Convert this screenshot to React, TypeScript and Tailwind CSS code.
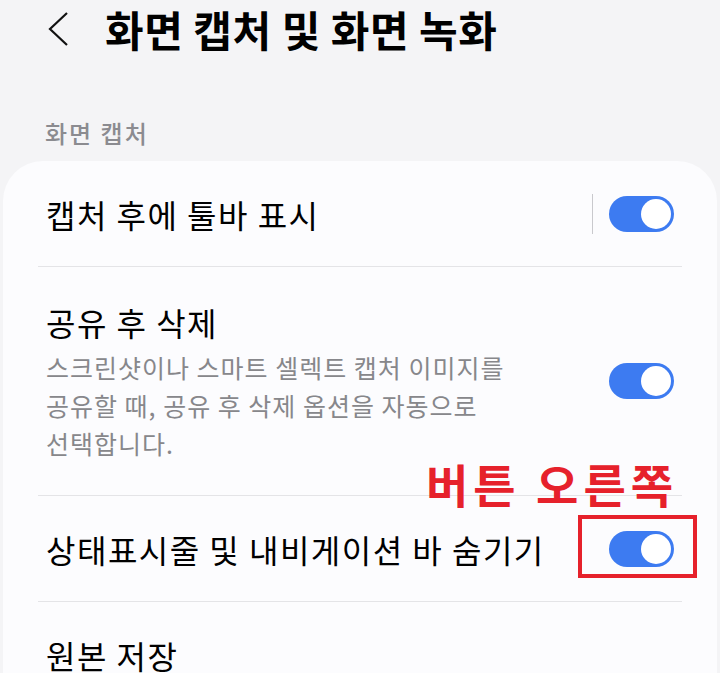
import type { ReactNode } from 'react'

const FONT = { fontFamily: '"Noto Sans CJK KR", "Noto Sans", sans-serif' }

function Toggle() {
  return (
    <span className="relative inline-flex h-[36px] w-[65px] shrink-0 items-center rounded-full bg-[#3d7bf1]">
      <span className="absolute right-[3px] top-[3px] h-[30px] w-[30px] rounded-full bg-white" />
    </span>
  )
}

function Divider() {
  return <div className="h-px bg-[#e4e4e7]" />
}

function Row({ children, divider = false }: { children: ReactNode; divider?: boolean }) {
  return (
    <div className="flex h-[105px] items-center justify-between px-[8px]">
      <span className="whitespace-nowrap text-[32px] leading-[44px] tracking-[1.5px] text-black">{children}</span>
      <div className="flex items-center">
        {divider && <span className="mr-[16px] h-[40px] w-px bg-[#c9c9cd]" />}
        <Toggle />
      </div>
    </div>
  )
}

export default function App() {
  return (
    <div className="relative min-h-screen overflow-hidden bg-[#f4f4f6]" style={FONT}>
      <header className="flex h-[58px] items-center pl-[47px]">
        <svg width="24" height="36" viewBox="0 0 24 36" fill="none" className="shrink-0">
          <path d="M20 2 L3 18 L20 34" stroke="#111" strokeWidth="2.2" strokeLinejoin="miter" />
        </svg>
        <h1 className="ml-[34px] whitespace-nowrap text-[42px] font-bold leading-[54px] tracking-[0.5px] text-black">
          화면 캡처 및 화면 녹화
        </h1>
      </header>

      <p className="mt-[60px] pl-[45px] text-[24px] font-medium leading-[30px] tracking-[2px] text-[#8b8b90]">
        화면 캡처
      </p>

      <section className="mx-[3px] mt-[13px] rounded-[40px] bg-[#fcfcfe] px-[35px] pb-[60px]">
        <Row divider>캡처 후에 툴바 표시</Row>
        <Divider />
        <div className="flex items-center justify-between px-[8px] py-[33px]">
          <div>
            <p className="text-[32px] leading-[44px] tracking-[1.5px] text-black">공유 후 삭제</p>
            <p className="mt-[4px] whitespace-nowrap text-[25px] leading-[38px] tracking-[1px] text-[#87878b]">
              스크린샷이나 스마트 셀렉트 캡처 이미지를
              <br />
              공유할 때, 공유 후 삭제 옵션을 자동으로
              <br />
              선택합니다.
            </p>
          </div>
          <Toggle />
        </div>
        <Divider />
        <Row>상태표시줄 및 내비게이션 바 숨기기</Row>
        <Divider />
        <div className="flex h-[105px] items-center px-[8px]">
          <span className="text-[32px] leading-[44px] tracking-[1.5px] text-black">원본 저장</span>
        </div>
      </section>

      <p className="absolute left-[426px] top-[460px] whitespace-nowrap text-[46px] font-bold leading-[46px] tracking-[5px] text-[#e6212b]">
        버튼 오른쪽
      </p>
      <div className="absolute left-[578px] top-[515px] h-[63px] w-[119px] border-[4px] border-[#e6212b]" />
    </div>
  )
}
